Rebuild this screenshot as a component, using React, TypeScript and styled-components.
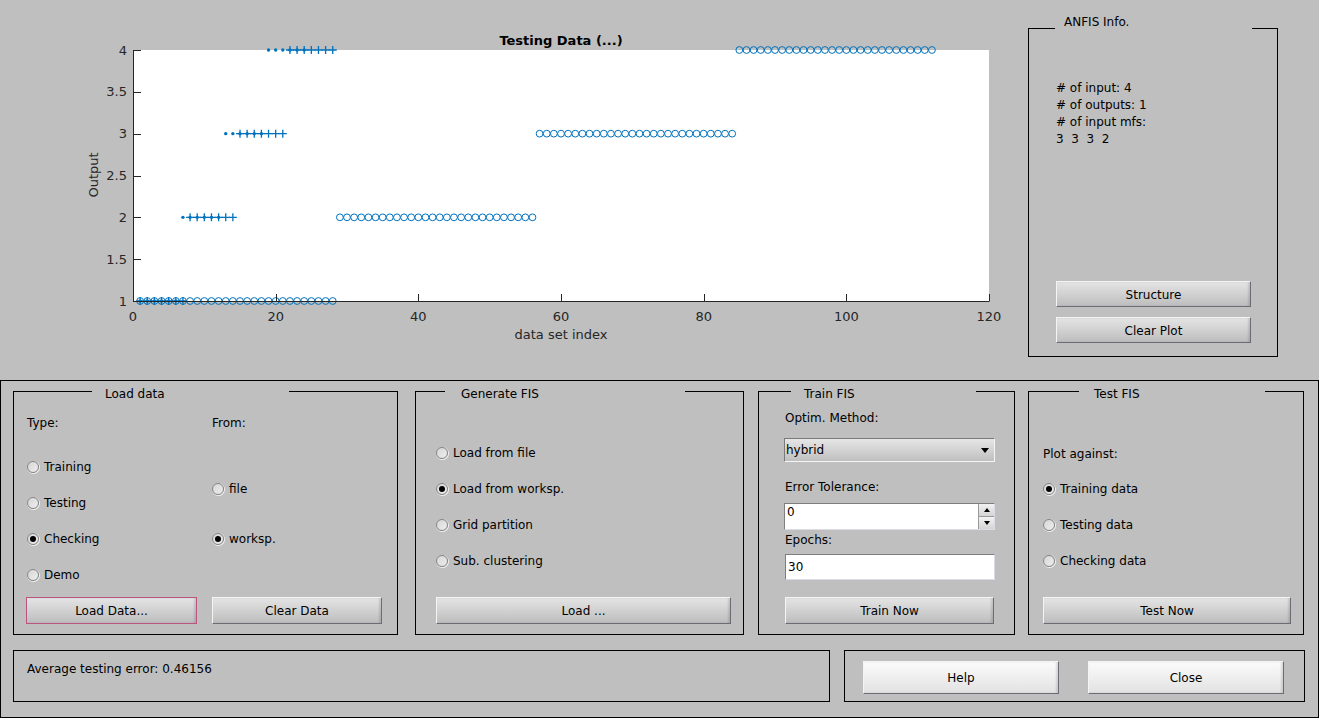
import React from 'react';
import styled, { createGlobalStyle } from 'styled-components';

const Global = createGlobalStyle`
  html, body { margin: 0; padding: 0; background: #bfbfbf; }
  body { font-family: "DejaVu Sans", "Liberation Sans", sans-serif; font-size: 12px; color: #000; }
  * { box-sizing: border-box; }
`;

const BG = '#bfbfbf';
const BLUE = '#0072BD';
const AX = '#262626';

const Window = styled.div`
  width: 1319px;
  height: 718px;
  overflow: hidden;
  background: ${BG};
  display: flex;
  flex-direction: column;
`;

const Top = styled.div`
  display: flex;
  height: 380px;
  flex: none;
`;

const Plot = styled.svg`
  display: block;
  width: 1028px;
  height: 380px;
  flex: none;
  font-family: "DejaVu Sans", sans-serif;
`;

const Panel = styled.div<{ $w: number; $h: number; $ml?: number; $mt?: number }>`
  position: relative;
  flex: none;
  width: ${p => p.$w}px;
  height: ${p => p.$h}px;
  margin-left: ${p => p.$ml ?? 0}px;
  margin-top: ${p => p.$mt ?? 0}px;
  border: 1px solid #000;
  display: flex;
  flex-direction: column;
`;

const Title = styled.span<{ $left: number; $w: number; $pad: number; $top: number }>`
  position: absolute;
  top: ${p => p.$top}px;
  left: ${p => p.$left}px;
  width: ${p => p.$w}px;
  padding-left: ${p => p.$pad}px;
  height: 16px;
  line-height: 16px;
  background: ${BG};
  white-space: nowrap;
`;

const InfoText = styled.div`
  padding: 51px 0 0 27px;
  line-height: 17px;
  white-space: pre;
`;

const StackButtons = styled.div`
  margin-top: auto;
  margin-bottom: 13px;
  padding-left: 27px;
  display: flex;
  flex-direction: column;
  gap: 10px;
`;

const Btn = styled.button<{ $w: number; $h?: number; $pt?: number; $focus?: boolean; $light?: boolean }>`
  flex: none;
  width: ${p => p.$w}px;
  height: ${p => p.$h ?? 27}px;
  margin: 0;
  padding: ${p => p.$pt ?? 0}px 0 0;
  font-family: "DejaVu Sans", sans-serif;
  font-size: 12px;
  color: #000;
  background: ${p =>
    p.$light
      ? 'linear-gradient(#fbfbfb, #ececec 60%, #e2e2e2)'
      : 'linear-gradient(#e4e4e4, #cdcdcd 60%, #bdbdbd)'};
  border: 1px solid;
  border-color: ${p => (p.$focus ? '#b9557f' : '#f4f4f4 #6c6c74 #6c6c74 #f4f4f4')};
  box-shadow: inset -2px 0 2px rgba(0, 0, 0, 0.12);
  cursor: default;
`;

const Frame = styled.div`
  flex: none;
  width: 1319px;
  height: 338px;
  border: 1px solid #000;
  padding: 10px 0 0 12px;
  display: flex;
  flex-direction: column;
`;

const PanelRow = styled.div`
  display: flex;
  height: 244px;
  flex: none;
`;

const BottomRow = styled.div`
  display: flex;
  margin-top: 15px;
  height: 52px;
  flex: none;
`;

const Body = styled.div<{ $pl: number }>`
  display: flex;
  padding-left: ${p => p.$pl}px;
`;

const Col = styled.div<{ $w?: number }>`
  display: flex;
  flex-direction: column;
  width: ${p => (p.$w ? `${p.$w}px` : 'auto')};
  flex: none;
`;

const Line = styled.div<{ $mt?: number; $ml?: number }>`
  height: 16px;
  padding-top: 2px;
  line-height: 14px;
  margin-top: ${p => p.$mt ?? 0}px;
  margin-left: ${p => p.$ml ?? 0}px;
  display: flex;
  align-items: center;
  white-space: nowrap;
`;

const RadioMark = styled.span<{ $on?: boolean }>`
  position: relative;
  flex: none;
  width: 12px;
  height: 12px;
  border-radius: 50%;
  border: 1px solid #858585;
  background: linear-gradient(135deg, #d6d6d6, #eeeeee);
  box-shadow: 0.5px 0.5px 0 0.5px #f2f2f2;
  margin-right: 5px;
  &::after {
    content: '';
    display: ${p => (p.$on ? 'block' : 'none')};
    position: absolute;
    left: 2px;
    top: 2px;
    width: 6px;
    height: 6px;
    border-radius: 50%;
    background: #000;
  }
`;

const ButtonRow = styled.div<{ $pl: number; $gap?: number }>`
  display: flex;
  margin-top: auto;
  margin-bottom: 10px;
  padding-left: ${p => p.$pl}px;
  gap: ${p => p.$gap ?? 0}px;
`;

const Select = styled.div<{ $mt: number }>`
  position: relative;
  margin-top: ${p => p.$mt}px;
  width: 211px;
  height: 24px;
  border: 1px solid;
  border-color: #7a7a7a #f4f4f4 #f4f4f4 #7a7a7a;
  background: linear-gradient(#e6e6e6, #cfcfcf 60%, #bfbfbf);
  display: flex;
  align-items: center;
  padding: 0 5px 0 1px;
  justify-content: space-between;
`;

const Caret = styled.span`
  width: 0;
  height: 0;
  border-left: 4px solid transparent;
  border-right: 4px solid transparent;
  border-top: 5px solid #000;
`;

const Field = styled.div<{ $mt: number; $w: number; $h: number; $ml?: number }>`
  margin-top: ${p => p.$mt}px;
  margin-left: ${p => p.$ml ?? 0}px;
  width: ${p => p.$w}px;
  height: ${p => p.$h}px;
  background: #fff;
  border: 1px solid;
  border-color: #7e7e7e #dcdce6 #dcdce6 #7e7e7e;
  display: flex;
  align-items: stretch;
`;

const FieldText = styled.span<{ $pt: number }>`
  flex: 1;
  padding: ${p => p.$pt}px 0 0 2px;
  line-height: 16px;
`;

const Spinner = styled.div`
  width: 16px;
  display: flex;
  flex-direction: column;
  border-left: 1px solid #9a9a9a;
`;

const SpinBtn = styled.div<{ $up?: boolean }>`
  flex: 1;
  display: flex;
  align-items: center;
  justify-content: center;
  background: linear-gradient(#f2f2f2, #d4d4d4);
  border-bottom: ${p => (p.$up ? '1px solid #9a9a9a' : 'none')};
  &::after {
    content: '';
    width: 0;
    height: 0;
    border-left: 3.5px solid transparent;
    border-right: 3.5px solid transparent;
    ${p => (p.$up ? 'border-bottom: 4px solid #000;' : 'border-top: 4px solid #000;')}
  }
`;

const StatusText = styled.div`
  padding: 10px 0 0 13px;
  line-height: 16px;
`;

const CloseRow = styled.div`
  display: flex;
  padding: 10px 0 0 18px;
  gap: 29px;
`;

/* ---------- Plot geometry ---------- */
const X0 = 133;
const X1 = 989;
const YB = 301;
const YT = 50;
const px = (v: number) => X0 + (v / 120) * (X1 - X0);
const py = (v: number) => YB - ((v - 1) / 3) * (YB - YT);

const circles = Array.from({ length: 112 }, (_, i) => ({ x: i + 1, y: Math.floor(i / 28) + 1 }));
const pluses = Array.from({ length: 28 }, (_, i) => ({ x: i + 1, y: Math.floor(i / 7) + 1 }));
const dots = Array.from({ length: 24 }, (_, i) => ({ x: i + 1, y: Math.floor(i / 6) + 1 }));

const xTicks = [0, 20, 40, 60, 80, 100, 120];
const yTicks = [1, 1.5, 2, 2.5, 3, 3.5, 4];

function Chart() {
  return (
    <Plot viewBox="0 0 1028 380">
      <rect x={X0} y={YT} width={X1 - X0} height={YB - YT} fill="#fff" />
      <text x={561} y={40} textAnchor="middle" dominantBaseline="central" fontSize={13} fontWeight="bold" fill="#000">
        Testing Data (...)
      </text>
      {circles.map((c, i) => (
        <circle key={`c${i}`} cx={px(c.x)} cy={py(c.y)} r={3.4} fill="none" stroke={BLUE} strokeWidth={1} />
      ))}
      {pluses.map((c, i) => {
        const x = px(c.x);
        const y = py(c.y);
        return (
          <path key={`p${i}`} d={`M${x - 4} ${y}H${x + 4}M${x} ${y - 4}V${y + 4}`} stroke={BLUE} strokeWidth={1.3} fill="none" />
        );
      })}
      {dots.map((c, i) => (
        <circle key={`d${i}`} cx={px(c.x)} cy={py(c.y)} r={1.7} fill={BLUE} />
      ))}
      <path d={`M${X0 + 0.5} ${YT}V${YB + 0.5}H${X1 + 0.5}`} stroke={AX} strokeWidth={1} fill="none" />
      {xTicks.map(t => (
        <g key={`xt${t}`}>
          <path d={`M${Math.round(px(t)) + 0.5} ${YB}V${YB - 7}`} stroke={AX} strokeWidth={1} />
          <text x={px(t)} y={316} textAnchor="middle" dominantBaseline="central" fontSize={13} fill={AX}>
            {t}
          </text>
        </g>
      ))}
      {yTicks.map(t => (
        <g key={`yt${t}`}>
          <path d={`M${X0} ${Math.round(py(t)) + 0.5}H${X0 + 8}`} stroke={AX} strokeWidth={1} />
          <text x={127} y={py(t)} textAnchor="end" dominantBaseline="central" fontSize={13} fill={AX}>
            {t}
          </text>
        </g>
      ))}
      <text x={561} y={334} textAnchor="middle" dominantBaseline="central" fontSize={13} fill={AX}>
        data set index
      </text>
      <text
        x={93}
        y={175}
        textAnchor="middle"
        dominantBaseline="central"
        fontSize={13}
        fill={AX}
        transform="rotate(-90 93 175)"
      >
        Output
      </text>
    </Plot>
  );
}

function Radio({ on, label, mt }: { on?: boolean; label: string; mt: number }) {
  return (
    <Line $mt={mt}>
      <RadioMark $on={on} />
      {label}
    </Line>
  );
}

export default function App() {
  return (
    <Window>
      <Global />
      <Top>
        <Chart />
        <Panel $w={250} $h={329} $mt={28}>
          <Title $left={26} $w={197} $pad={9} $top={-15}>ANFIS Info.</Title>
          <InfoText>{'# of input: 4\n# of outputs: 1\n# of input mfs:\n3  3  3  2'}</InfoText>
          <StackButtons>
            <Btn $w={195} $h={26} $pt={1}>Structure</Btn>
            <Btn $w={195} $h={26} $pt={1}>Clear Plot</Btn>
          </StackButtons>
        </Panel>
      </Top>
      <Frame>
        <PanelRow>
          <Panel $w={385} $h={244}>
            <Title $left={78} $w={197} $pad={13} $top={-6}>Load data</Title>
            <Body $pl={13}>
              <Col $w={185}>
                <Line $mt={22}>Type:</Line>
                <Radio label="Training" mt={28} />
                <Radio label="Testing" mt={20} />
                <Radio on label="Checking" mt={20} />
                <Radio label="Demo" mt={20} />
              </Col>
              <Col>
                <Line $mt={22}>From:</Line>
                <Radio label="file" mt={50} />
                <Radio on label="worksp." mt={34} />
              </Col>
            </Body>
            <ButtonRow $pl={12} $gap={15}>
              <Btn $w={171} $focus>Load Data...</Btn>
              <Btn $w={170}>Clear Data</Btn>
            </ButtonRow>
          </Panel>

          <Panel $w={329} $h={244} $ml={17}>
            <Title $left={29} $w={240} $pad={16} $top={-6}>Generate FIS</Title>
            <Body $pl={20}>
              <Col>
                <Radio label="Load from file" mt={52} />
                <Radio on label="Load from worksp." mt={20} />
                <Radio label="Grid partition" mt={20} />
                <Radio label="Sub. clustering" mt={20} />
              </Col>
            </Body>
            <ButtonRow $pl={20}>
              <Btn $w={295}>Load ...</Btn>
            </ButtonRow>
          </Panel>

          <Panel $w={257} $h={244} $ml={14}>
            <Title $left={32} $w={185} $pad={13} $top={-6}>Train FIS</Title>
            <Body $pl={25}>
              <Col>
                <Line $mt={17} $ml={1}>Optim. Method:</Line>
                <Select $mt={13}>
                  <span>hybrid</span>
                  <Caret />
                </Select>
                <Line $mt={16} $ml={1}>Error Tolerance:</Line>
                <Field $mt={9} $w={211} $h={27}>
                  <FieldText $pt={0}>0</FieldText>
                  <Spinner>
                    <SpinBtn $up />
                    <SpinBtn />
                  </Spinner>
                </Field>
                <Line $mt={1} $ml={1}>Epochs:</Line>
                <Field $mt={7} $w={210} $h={26} $ml={1}>
                  <FieldText $pt={4}>30</FieldText>
                </Field>
              </Col>
            </Body>
            <ButtonRow $pl={26}>
              <Btn $w={209}>Train Now</Btn>
            </ButtonRow>
          </Panel>

          <Panel $w={276} $h={244} $ml={13}>
            <Title $left={50} $w={186} $pad={15} $top={-6}>Test FIS</Title>
            <Body $pl={14}>
              <Col>
                <Line $mt={53}>Plot against:</Line>
                <Radio on label="Training data" mt={19} />
                <Radio label="Testing data" mt={20} />
                <Radio label="Checking data" mt={20} />
              </Col>
            </Body>
            <ButtonRow $pl={14}>
              <Btn $w={248}>Test Now</Btn>
            </ButtonRow>
          </Panel>
        </PanelRow>

        <BottomRow>
          <Panel $w={817} $h={52}>
            <StatusText>Average testing error: 0.46156</StatusText>
          </Panel>
          <Panel $w={461} $h={52} $ml={14}>
            <CloseRow>
              <Btn $w={196} $h={33} $pt={1} $light>Help</Btn>
              <Btn $w={196} $h={33} $pt={1} $light>Close</Btn>
            </CloseRow>
          </Panel>
        </BottomRow>
      </Frame>
    </Window>
  );
}
